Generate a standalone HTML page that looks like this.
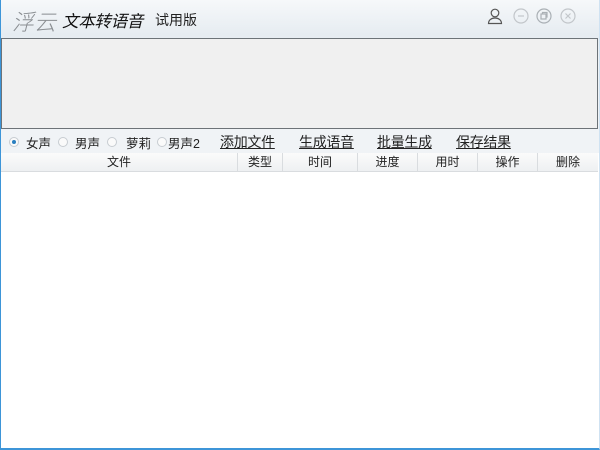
<!DOCTYPE html>
<html><head><meta charset="utf-8"><style>
*{margin:0;padding:0;box-sizing:border-box}
body{width:600px;height:450px;overflow:hidden;font-family:"Liberation Sans","Noto Sans CJK SC",sans-serif;font-size:12px;color:#111;background:#fff;position:relative}
.win{position:absolute;left:0;top:0;width:600px;height:450px;border-left:1px solid #3d95d8;border-bottom:2px solid #3d95d8;border-right:1px solid #cfe2f2}
.top{position:absolute;left:0;top:0;width:600px;height:153px;background:linear-gradient(#f6f8fa,#e6ecf1 35px,#eef2f5 60px,#f0f3f6)}
.logo{position:absolute;left:12px;top:5px;font-size:22px;font-style:italic;color:#8a8e92;font-family:"Noto Sans CJK SC",sans-serif;font-weight:300}
.title{position:absolute;left:62px;top:8px;font-size:16.5px;font-style:italic;color:#111;font-family:"Noto Sans CJK SC",sans-serif;letter-spacing:-0.3px}
.trial{position:absolute;left:155px;top:10px;font-size:14px;color:#222}
.ta{position:absolute;left:1px;top:38px;width:597px;height:91px;background:#f0f0f0;border:1px solid #6d7378}
.row{position:absolute;top:133px;font-size:12.5px;color:#222}
.rad{position:absolute;top:137px;width:10px;height:10px;border-radius:50%;border:1px solid #c7ccd1;background:#fafafa}
.rad.on::after{content:"";position:absolute;left:2px;top:2px;width:4px;height:4px;border-radius:50%;background:#2a7fc0}
.lk{position:absolute;top:132px;font-size:14px;text-decoration:underline;color:#222;letter-spacing:-0.3px}
.hd{position:absolute;top:153px;left:1px;width:597px;height:19px;background:linear-gradient(#fbfbfb,#eef0f2);border-bottom:1px solid #d9dcdf}
.hd div{position:absolute;top:0;height:18px;line-height:18px;text-align:center;border-right:1px solid #d9dcdf;font-size:12px;color:#222}
</style></head><body>
<div class="top"></div>
<div class="logo">浮云</div>
<div class="title">文本转语音</div>
<div class="trial">试用版</div>
<svg style="position:absolute;left:486px;top:7px" width="18" height="18" viewBox="0 0 18 18" fill="none" stroke="#555" stroke-width="1.2"><circle cx="9" cy="6" r="3.8"/><path d="M2.5 16.5c0-3.5 3-5.5 6.5-5.5s6.5 2 6.5 5.5z"/></svg>
<svg style="position:absolute;left:513px;top:8px" width="16" height="16" viewBox="0 0 16 16" fill="none" stroke="#c2c6ca" stroke-width="1.2"><circle cx="8" cy="8" r="7"/><path d="M5 8h6"/></svg>
<svg style="position:absolute;left:536px;top:8px" width="16" height="16" viewBox="0 0 16 16" fill="none" stroke="#aab0b5" stroke-width="1.2"><circle cx="8" cy="8" r="7"/><rect x="5" y="6" width="5" height="5"/><path d="M6.5 6V4.5h4.5v4.5H10"/></svg>
<svg style="position:absolute;left:560px;top:8px" width="16" height="16" viewBox="0 0 16 16" fill="none" stroke="#c2c6ca" stroke-width="1.2"><circle cx="8" cy="8" r="7"/><path d="M5.5 5.5l5 5M10.5 5.5l-5 5"/></svg>
<div class="ta"></div>
<div class="rad on" style="left:9px"></div><div class="row" style="left:26px">女声</div>
<div class="rad" style="left:58px"></div><div class="row" style="left:75px">男声</div>
<div class="rad" style="left:107px"></div><div class="row" style="left:126px">萝莉</div>
<div class="rad" style="left:157px"></div><div class="row" style="left:168px">男声2</div>
<div class="lk" style="left:220px">添加文件</div>
<div class="lk" style="left:299px">生成语音</div>
<div class="lk" style="left:377px">批量生成</div>
<div class="lk" style="left:456px">保存结果</div>
<div class="hd">
<div style="left:0;width:237px">文件</div>
<div style="left:237px;width:45px">类型</div>
<div style="left:282px;width:75px">时间</div>
<div style="left:357px;width:60px">进度</div>
<div style="left:417px;width:60px">用时</div>
<div style="left:477px;width:60px">操作</div>
<div style="left:537px;width:60px;border-right:none">删除</div>
</div>
<div class="win"></div>
</body></html>
